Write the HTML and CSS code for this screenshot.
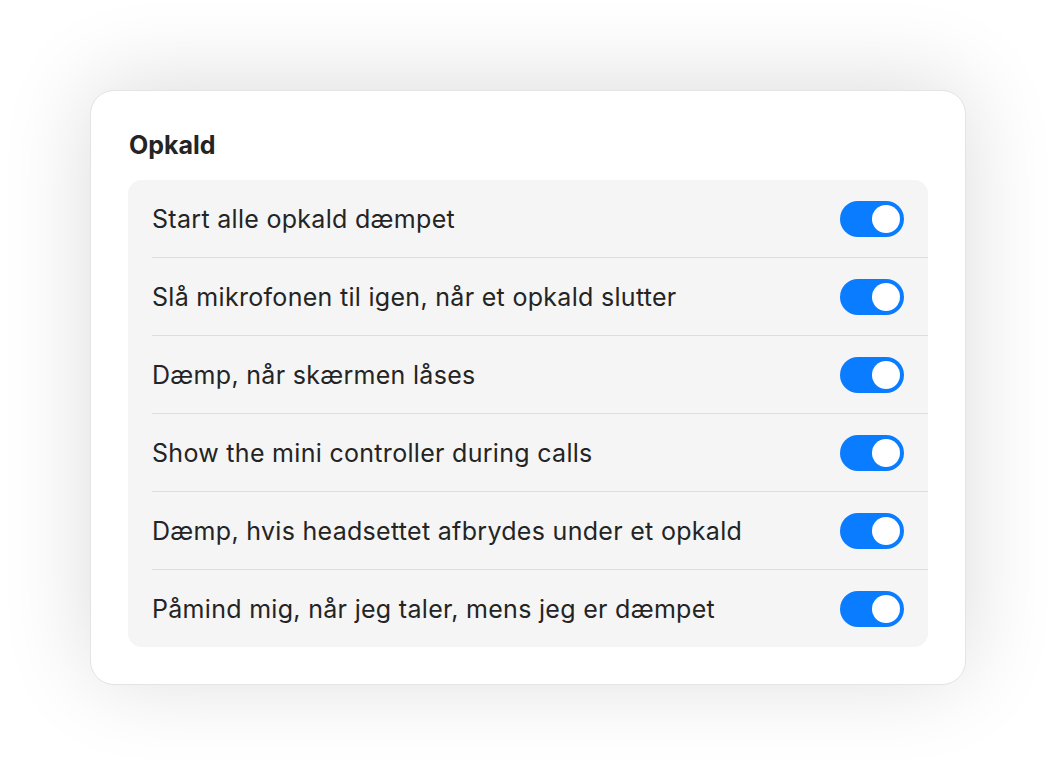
FILE: index.html
```html
<!DOCTYPE html>
<html lang="da">

<head>
    <meta charset="UTF-8">
    <meta name="viewport" content="width=device-width, initial-scale=1.0">
    <title>Opkald</title>
    <link rel="stylesheet" href="styles.css">
</head>

<body>
<div class="panel">
    <h2 class="panel-title">Opkald</h2>
    <div class="group">
        <div class="row">
            <span class="label">Start alle opkald dæmpet</span>
            <span class="toggle on"></span>
        </div>
        <div class="row">
            <span class="label">Slå mikrofonen til igen, når et opkald slutter</span>
            <span class="toggle on"></span>
        </div>
        <div class="row">
            <span class="label">Dæmp, når skærmen låses</span>
            <span class="toggle on"></span>
        </div>
        <div class="row">
            <span class="label">Show the mini controller during calls</span>
            <span class="toggle on"></span>
        </div>
        <div class="row">
            <span class="label">Dæmp, hvis headsettet afbrydes under et opkald</span>
            <span class="toggle on"></span>
        </div>
        <div class="row">
            <span class="label">Påmind mig, når jeg taler, mens jeg er dæmpet</span>
            <span class="toggle on"></span>
        </div>
    </div>
</div>
</body>

</html>
```

FILE: styles.css
```css
body {
    margin: 0;
    padding: 90px;
    background-color: #ffffff;
    font-family: Inter, "Noto Sans", sans-serif;
    color: #242424;
}

.panel {
    box-sizing: border-box;
    width: 876px;
    padding: 38px 37px 37px;
    background-color: #ffffff;
    border: 1px solid #e4e4e4;
    border-radius: 24px;
    box-shadow: 0 -6px 90px rgba(0, 0, 0, 0.14);
}

.panel-title {
    margin: 0 0 19px 1px;
    font-size: 25px;
    line-height: 32px;
    font-weight: 700;
}

.group {
    background-color: #f5f5f5;
    border-radius: 14px;
    overflow: hidden;
}

.row {
    display: flex;
    justify-content: space-between;
    align-items: center;
    height: 77px;
    margin-left: 24px;
    padding-right: 24px;
    border-top: 1px solid #dedede;
}

.row:first-child {
    border-top: none;
}

.label {
    font-size: 25px;
    letter-spacing: 0.3px;
}

.toggle {
    position: relative;
    width: 64px;
    height: 36px;
    border-radius: 18px;
    background-color: #d0d0d0;
}

.toggle.on {
    background-color: #0a7cff;
}

.toggle::after {
    content: "";
    position: absolute;
    top: 4px;
    left: 4px;
    width: 28px;
    height: 28px;
    border-radius: 50%;
    background-color: #ffffff;
}

.toggle.on::after {
    left: 32px;
}
```
